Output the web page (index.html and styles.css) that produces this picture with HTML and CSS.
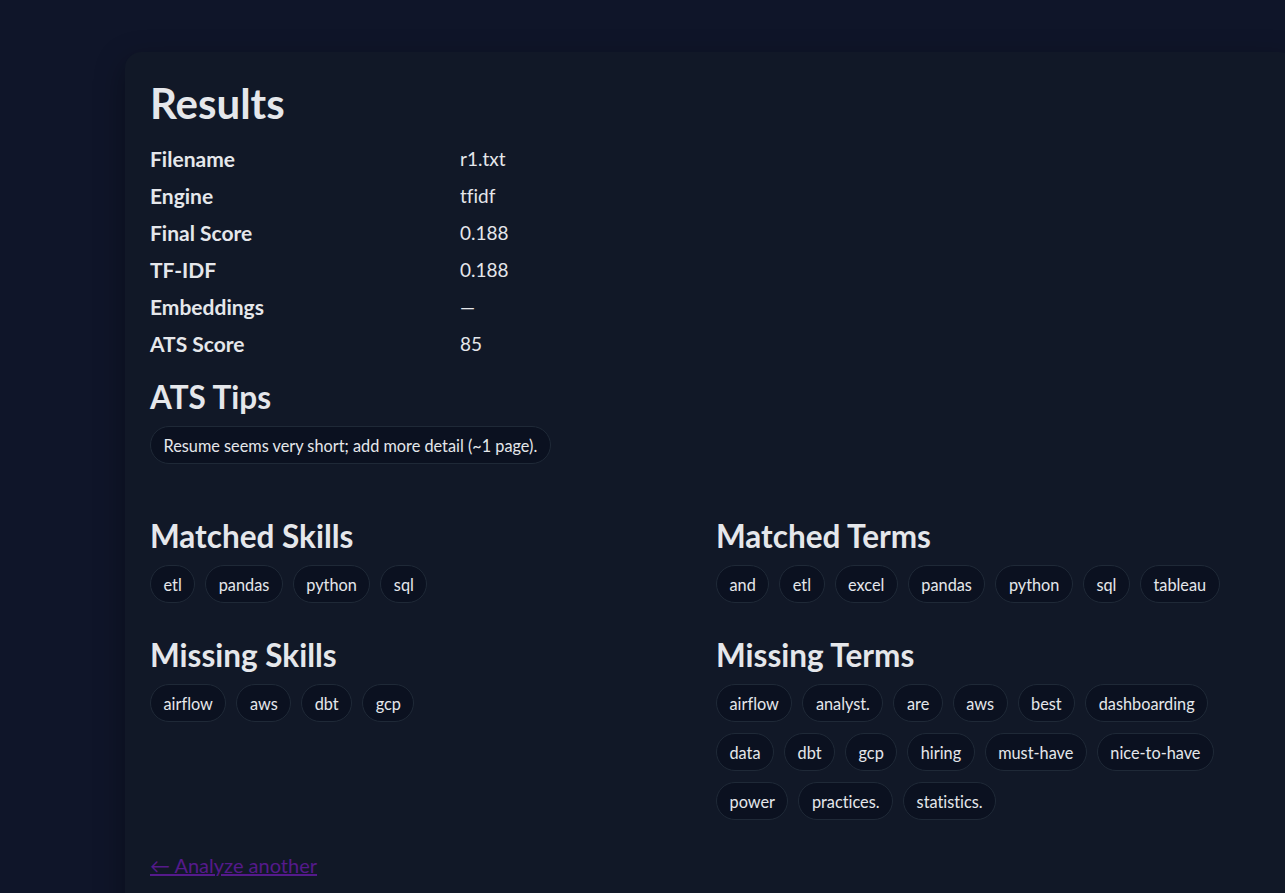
FILE: index.html
```html
<!DOCTYPE html>
<html lang="en">
<head>
<meta charset="utf-8">
<title>Results</title>
<link rel="stylesheet" href="styles.css">
</head>
<body>
<main class="page">
  <section class="card">
    <h1 class="title">Results</h1>
    <div class="meta">
      <div class="label">Filename</div><div class="value">r1.txt</div>
      <div class="label">Engine</div><div class="value">tfidf</div>
      <div class="label">Final Score</div><div class="value">0.188</div>
      <div class="label">TF-IDF</div><div class="value">0.188</div>
      <div class="label">Embeddings</div><div class="value">—</div>
      <div class="label">ATS Score</div><div class="value">85</div>
    </div>

    <h2 class="heading">ATS Tips</h2>
    <div class="pills tips">
      <span class="pill">Resume seems very short; add more detail (~1 page).</span>
    </div>

    <div class="columns">
      <div class="col">
        <h2 class="heading">Matched Skills</h2>
        <div class="pills">
          <span class="pill">etl</span><span class="pill">pandas</span><span class="pill">python</span><span class="pill">sql</span>
        </div>
        <h2 class="heading next">Missing Skills</h2>
        <div class="pills">
          <span class="pill">airflow</span><span class="pill">aws</span><span class="pill">dbt</span><span class="pill">gcp</span>
        </div>
      </div>
      <div class="col">
        <h2 class="heading">Matched Terms</h2>
        <div class="pills">
          <span class="pill">and</span><span class="pill">etl</span><span class="pill">excel</span><span class="pill">pandas</span><span class="pill">python</span><span class="pill">sql</span><span class="pill">tableau</span>
        </div>
        <h2 class="heading next">Missing Terms</h2>
        <div class="pills">
          <span class="pill">airflow</span><span class="pill">analyst.</span><span class="pill">are</span><span class="pill">aws</span><span class="pill">best</span><span class="pill">dashboarding</span><span class="pill">data</span><span class="pill">dbt</span><span class="pill">gcp</span><span class="pill">hiring</span><span class="pill">must-have</span><span class="pill">nice-to-have</span><span class="pill">power</span><span class="pill">practices.</span><span class="pill">statistics.</span>
        </div>
      </div>
    </div>

    <p class="back"><a href="#" class="back-link">← Analyze another</a></p>
  </section>
</main>
</body>
</html>
```

FILE: styles.css
```css
html, body {
  margin: 0;
  padding: 0;
}

body {
  background: #0f1529;
  color: #e5e7eb;
  font-family: "Segoe UI", Lato, "Noto Sans", sans-serif;
  font-variant-ligatures: none;
  overflow: hidden;
}

.page {
  padding: 52px 0 0 125px;
}

.card {
  box-sizing: border-box;
  width: 1170px;
  min-height: 900px;
  background: #111827;
  border-radius: 16px;
  padding: 24px 24px 24px 25px;
  box-shadow: 0 10px 30px rgba(0, 0, 0, 0.35);
}

.title {
  margin: 3px 0 12px;
  font-size: 42px;
  line-height: 49px;
  font-weight: 700;
  color: #e5e7eb;
}

.meta {
  display: grid;
  grid-template-columns: 310px 1fr;
  grid-auto-rows: 37px;
  font-size: 19px;
  line-height: 37px;
}

.label {
  font-weight: 700;
  font-size: 21px;
}

.value {
  font-weight: 400;
}

.heading {
  margin: 18px 0 12px;
  font-size: 31.5px;
  line-height: 34px;
  font-weight: 700;
  color: #e5e7eb;
}

.heading.next {
  margin-top: 35px;
}

.pills {
  display: flex;
  flex-wrap: wrap;
  column-gap: 10px;
  row-gap: 11px;
}

.pill {
  box-sizing: border-box;
  height: 38px;
  display: inline-flex;
  align-items: center;
  padding: 1px 12.5px 0;
  border: 1px solid #1f2937;
  border-radius: 999px;
  background: #0b1120;
  font-size: 16.3px;
  color: #e5e7eb;
  white-space: nowrap;
}

.tips {
  margin-bottom: 36px;
}

.columns {
  display: grid;
  grid-template-columns: 518px 518px;
  column-gap: 48px;
}

.col .heading:first-child {
  margin-top: 19px;
}

.back {
  margin: 31px 0 0;
  font-size: 20px;
  line-height: 28px;
}

.back-link {
  color: #551a8b;
  text-decoration: underline;
}
```
